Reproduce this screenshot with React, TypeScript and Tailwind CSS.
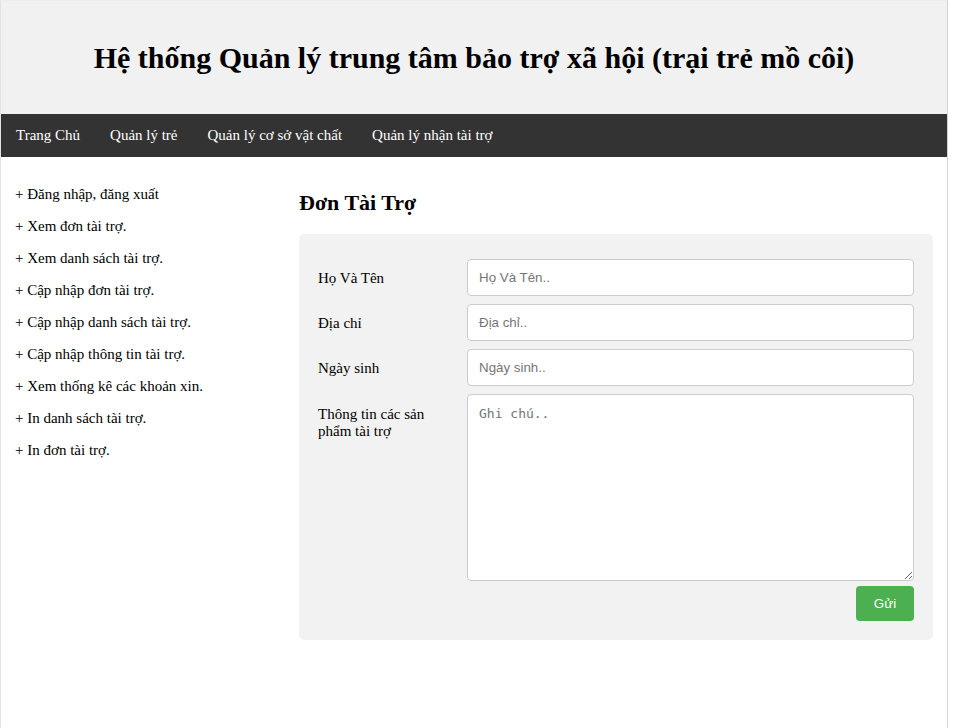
import React from "react";

const serif = { fontFamily: '"Liberation Serif", "Times New Roman", serif' };

export default function App() {
  const side = [
    "+ Đăng nhập, đăng xuất",
    "+ Xem đơn tài trợ.",
    "+ Xem danh sách tài trợ.",
    "+ Cập nhập đơn tài trợ.",
    "+ Cập nhập danh sách tài trợ.",
    "+ Cập nhập thông tin tài trợ.",
    "+ Xem thống kê các khoản xin.",
    "+ In danh sách tài trợ.",
    "+ In đơn tài trợ.",
  ];
  const nav = ["Trang Chủ", "Quản lý trẻ", "Quản lý cơ sở vật chất", "Quản lý nhận tài trợ"];
  const fields = [
    ["Họ Và Tên", "Họ Và Tên.."],
    ["Địa chỉ", "Địa chỉ.."],
    ["Ngày sinh", "Ngày sinh.."],
  ];
  return (
    <div className="min-h-[728px] bg-white" style={serif}>
      <div className="w-[948px] min-h-[728px] border-l border-t border-r border-l-[#e3e3e3] border-t-[#ececec] border-r-[#d4d4d4] text-black">
        <header className="h-[113px] bg-[#f1f1f1] flex items-center justify-center">
          <h1 className="text-[30px] font-bold leading-none">
            Hệ thống Quản lý trung tâm bảo trợ xã hội (trại trẻ mồ côi)
          </h1>
        </header>
        <nav className="h-[43px] bg-[#333333] flex items-center">
          {nav.map((n) => (
            <a key={n} className="px-[15px] text-white text-[15px] leading-[43px]">
              {n}
            </a>
          ))}
        </nav>
        <div className="flex">
          <aside className="w-[298px] pl-[14px] pt-[27px] text-[15px]">
            {side.map((s) => (
              <div key={s} className="h-[32px] leading-[20px]">
                {s}
              </div>
            ))}
          </aside>
          <main className="w-[634px] pt-[32px]">
            <h2 className="text-[22px] font-bold leading-[28px] mb-[17px]">Đơn Tài Trợ</h2>
            <div className="bg-[#f2f2f2] rounded-[5px] px-[19px] pt-[25px] pb-[19px]">
              {fields.map(([l, p], i) => (
                <div key={l} className={"flex" + (i > 0 ? " mt-[8px]" : "")}>
                  <label className="w-[149px] text-[15px] flex items-center h-[37px] pt-[1px]">{l}</label>
                  <input
                    placeholder={p}
                    className="flex-1 h-[37px] bg-white border border-[#cccccc] rounded-[4px] px-[11px] text-[13.33px] placeholder:text-[#757575] outline-none"
                    style={{ fontFamily: '"Liberation Sans", Arial, sans-serif' }}
                  />
                </div>
              ))}
              <div className="flex mt-[8px]">
                <label className="w-[149px] text-[15px] leading-[17px] pt-[12px] pr-[20px]">
                  Thông tin các sản phẩm tài trợ
                </label>
                <textarea
                  placeholder="Ghi chú.."
                  className="flex-1 h-[187px] bg-white border border-[#cccccc] rounded-[4px] px-[11px] py-[9px] text-[13px] placeholder:text-[#757575] outline-none resize-y"
                  style={{ fontFamily: '"DejaVu Sans Mono", "Liberation Mono", monospace' }}
                />
              </div>
              <div className="flex justify-end mt-[5px]">
                <button
                  className="w-[58px] h-[35px] bg-[#4CAF50] text-white text-[13.33px] rounded-[4px]"
                  style={{ fontFamily: '"Liberation Sans", Arial, sans-serif' }}
                >
                  Gửi
                </button>
              </div>
            </div>
          </main>
        </div>
      </div>
    </div>
  );
}
